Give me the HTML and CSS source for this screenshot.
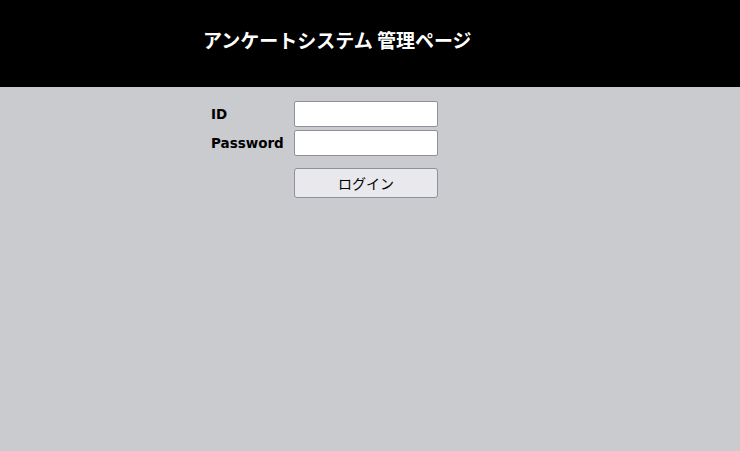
FILE: index.html
```html
<!DOCTYPE html>
<html lang="ja">
<head>
<meta charset="utf-8">
<title>アンケートシステム 管理ページ</title>
<link rel="stylesheet" href="styles.css">
</head>
<body>
<header class="header">
  <h1 class="title">アンケートシステム 管理ページ</h1>
</header>
<main class="main">
  <form class="login">
    <label class="label" for="id">ID</label>
    <input class="field" id="id" type="text">
    <label class="label" for="pw">Password</label>
    <input class="field" id="pw" type="password">
    <span></span>
    <button class="btn" type="button">ログイン</button>
  </form>
</main>
</body>
</html>
```
FILE: styles.css
```css
html, body {
  margin: 0;
  padding: 0;
  background: #c9cbce;
  height: 100%;
}
body {
  font-family: "DejaVu Sans", "Noto Sans CJK JP", sans-serif;
}
.header {
  background: #000;
  height: 87px;
  box-sizing: border-box;
  padding: 27px 0 0 203px;
}
.title {
  margin: 0;
  color: #fff;
  font-family: "Noto Sans CJK JP", sans-serif;
  font-weight: 700;
  font-size: 19px;
  line-height: 26px;
}
.main {
  padding: 14px 0 0 211px;
}
.login {
  display: grid;
  grid-template-columns: 83px 144px;
  grid-auto-rows: auto;
  row-gap: 3px;
  align-items: center;
}
.label {
  font-weight: 700;
  font-size: 13.5px;
  color: #000;
}
.field {
  box-sizing: border-box;
  width: 144px;
  height: 26px;
  margin: 0;
  border: 1px solid #8f8f9d;
  border-radius: 2px;
  background: #fff;
}
.btn {
  grid-column: 2;
  box-sizing: border-box;
  width: 144px;
  height: 30px;
  margin-top: 9px;
  border: 1px solid #8f8f9d;
  border-radius: 3px;
  background: #e9e9ed;
  font-family: "Noto Sans CJK JP", sans-serif;
  font-size: 14px;
  color: #000;
}
```
